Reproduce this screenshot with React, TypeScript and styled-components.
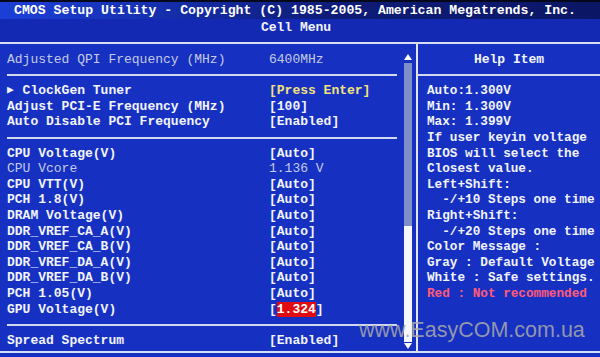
import React from "react";
import styled, { createGlobalStyle } from "styled-components";

const GlobalStyle = createGlobalStyle`
  html, body {
    margin: 0;
    padding: 0;
    background: #1430c0;
  }
`;

const LINE = 15.6;

const Screen = styled.div`
  position: relative;
  width: 600px;
  height: 357px;
  overflow: hidden;
  background: #1631c2;
  color: #f2f4ff;
  font-family: "Liberation Mono", "DejaVu Sans Mono", monospace;
  font-size: 13px;
  font-weight: bold;
  display: flex;
  flex-direction: column;
`;

const TitleBar = styled.div`
  height: 17px;
  border-top: 2px solid #05081a;
  background: linear-gradient(90deg, #1c3fd8 0%, #1530b0 25%, #0e1c78 55%, #0b1664 100%);
  padding-left: 14px;
  font-size: 13.2px;
  line-height: 17px;
  white-space: pre;
  color: #ffffff;
`;

const SubBar = styled.div`
  height: 23px;
  background: #1329b4;
  text-align: center;
  line-height: 17px;
  padding-right: 8px;
`;

const HLine = styled.div`
  height: 2px;
  background: #d6dcf2;
  flex-shrink: 0;
`;

const Body = styled.div`
  display: flex;
  height: 307px;
`;

const LeftPanel = styled.div`
  width: 416px;
  flex-shrink: 0;
  display: flex;
  padding-left: 7px;
  box-sizing: border-box;
`;

const Rows = styled.div`
  width: 390px;
  padding-top: 8px;
  display: flex;
  flex-direction: column;
`;

const Row = styled.div<{ $dim?: boolean }>`
  display: grid;
  grid-template-columns: 262px 1fr;
  height: ${LINE}px;
  line-height: ${LINE}px;
  white-space: pre;
  color: ${(p) => (p.$dim ? "#c4cbe6" : "#f2f4ff")};
  font-weight: ${(p) => (p.$dim ? "normal" : "bold")};
`;

const Value = styled.span<{ $yellow?: boolean }>`
  color: ${(p) => (p.$yellow ? "#f4e27a" : "inherit")};
`;

const Alert = styled.span`
  background: #e00c10;
  color: #ffffff;
`;

const Arrow = styled.span`
  display: inline-block;
  width: 15.6px;
  font-size: 11px;
  vertical-align: top;
`;

const Sep = styled.div`
  height: ${LINE}px;
  display: flex;
  align-items: center;
  &::after {
    content: "";
    display: block;
    width: 100%;
    height: 2px;
    background: #d2d8f0;
  }
`;

const ScrollCol = styled.div`
  width: 8px;
  margin-left: 7px;
  padding: 10px 0 2px;
  display: flex;
  flex-direction: column;
  align-items: center;
`;

const ScrollArrow = styled.div<{ $down?: boolean }>`
  width: 0;
  height: 0;
  border-left: 4px solid transparent;
  border-right: 4px solid transparent;
  ${(p) =>
    p.$down
      ? "border-top: 6px solid #ffffff; margin-top: 1px;"
      : "border-bottom: 6px solid #ffffff; margin-bottom: 3px;"}
`;

const Track = styled.div`
  flex: 1;
  width: 8px;
  display: flex;
  flex-direction: column;
  background: #7f8ec9;
`;

const Thumb = styled.div`
  margin-top: auto;
  height: 116px;
  background: #f4f6fc;
`;

const Divider = styled.div`
  width: 2px;
  flex-shrink: 0;
  background: #dfe4f6;
`;

const RightPanel = styled.div`
  flex: 1;
  min-width: 0;
  overflow: hidden;
  padding-top: 8px;
  display: flex;
  flex-direction: column;
`;

const HelpTitle = styled.div`
  height: ${LINE}px;
  line-height: ${LINE}px;
  text-align: center;
`;

const HelpText = styled.div`
  padding-left: 9px;
  white-space: pre;
  font-size: 12.7px;
  line-height: ${LINE}px;
`;

const HelpLine = styled.div<{ $red?: boolean }>`
  height: ${LINE}px;
  color: ${(p) => (p.$red ? "#ff5a78" : "#f2f4ff")};
`;

const BottomLine = styled.div`
  height: 2px;
  background: #d6dcf2;
`;

const Watermark = styled.div`
  position: absolute;
  left: 359px;
  top: 318px;
  font-family: "Liberation Sans", Arial, sans-serif;
  font-weight: normal;
  font-size: 21.5px;
  color: rgba(170, 170, 170, 0.85);
  white-space: nowrap;
`;

type Item =
  | { sep: true }
  | { label: string; value?: React.ReactNode; dim?: boolean; sub?: boolean; yellow?: boolean };

const items: Item[] = [
  { label: "Adjusted QPI Frequency (MHz)", value: "6400MHz", dim: true },
  { sep: true },
  { label: "ClockGen Tuner", value: "[Press Enter]", sub: true, yellow: true },
  { label: "Adjust PCI-E Frequency (MHz)", value: "[100]" },
  { label: "Auto Disable PCI Frequency", value: "[Enabled]" },
  { sep: true },
  { label: "CPU Voltage(V)", value: "[Auto]" },
  { label: "CPU Vcore", value: "1.136 V", dim: true },
  { label: "CPU VTT(V)", value: "[Auto]" },
  { label: "PCH 1.8(V)", value: "[Auto]" },
  { label: "DRAM Voltage(V)", value: "[Auto]" },
  { label: "DDR_VREF_CA_A(V)", value: "[Auto]" },
  { label: "DDR_VREF_CA_B(V)", value: "[Auto]" },
  { label: "DDR_VREF_DA_A(V)", value: "[Auto]" },
  { label: "DDR_VREF_DA_B(V)", value: "[Auto]" },
  { label: "PCH 1.05(V)", value: "[Auto]" },
  {
    label: "GPU Voltage(V)",
    value: (
      <>
        [<Alert>1.324</Alert>]
      </>
    ),
  },
  { sep: true },
  { label: "Spread Spectrum", value: "[Enabled]" },
];

const help = [
  "Auto:1.300V",
  "Min: 1.300V",
  "Max: 1.399V",
  "If user keyin voltage",
  "BIOS will select the",
  "Closest value.",
  "Left+Shift:",
  "  -/+10 Steps one time",
  "Right+Shift:",
  "  -/+20 Steps one time",
  "Color Message :",
  "Gray : Default Voltage",
  "White : Safe settings.",
];

export default function App() {
  return (
    <>
      <GlobalStyle />
      <Screen>
        <TitleBar>CMOS Setup Utility - Copyright (C) 1985-2005, American Megatrends, Inc.</TitleBar>
        <SubBar>Cell Menu</SubBar>
        <HLine />
        <Body>
          <LeftPanel>
            <Rows>
              {items.map((it, i) =>
                "sep" in it ? (
                  <Sep key={i} />
                ) : (
                  <Row key={i} $dim={it.dim}>
                    <span>
                      {it.sub && <Arrow>▶</Arrow>}
                      {it.label}
                    </span>
                    <Value $yellow={it.yellow}>{it.value}</Value>
                  </Row>
                )
              )}
            </Rows>
            <ScrollCol>
              <ScrollArrow />
              <Track>
                <Thumb />
              </Track>
              <ScrollArrow $down />
            </ScrollCol>
          </LeftPanel>
          <Divider />
          <RightPanel>
            <HelpTitle>Help Item</HelpTitle>
            <Sep />
            <HelpText>
              {help.map((t, i) => (
                <HelpLine key={i}>{t}</HelpLine>
              ))}
              <HelpLine $red>Red : Not recommended</HelpLine>
            </HelpText>
          </RightPanel>
        </Body>
        <BottomLine />
        <Watermark>www.EasyCOM.com.ua</Watermark>
      </Screen>
    </>
  );
}
